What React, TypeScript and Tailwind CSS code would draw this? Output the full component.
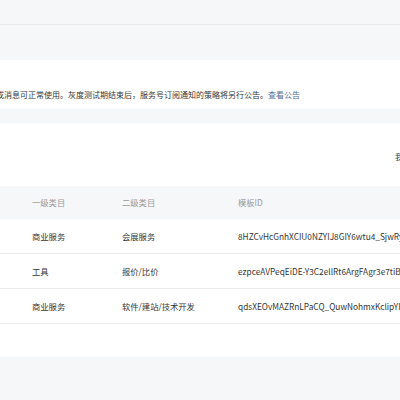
const rows = [
  { first: "商业服务", second: "会展服务", id: "8HZCvHcGnhXCIU0NZYIJ8GIY6wtu4_SjwRyQb3kD2mL" },
  { first: "工具", second: "报价/比价", id: "ezpceAVPeqEiDE-Y3C2ellRt6ArgFAgr3e7tiBxk9Pq" },
  { first: "商业服务", second: "软件/建站/技术开发", id: "qdsXEOvMAZRnLPaCQ_QuwNohmxKclipYIw2sT0aVh" },
];

export default function App() {
  return (
    <div
      className="h-[400px] w-[400px] overflow-hidden bg-[#f6f7f9] text-[8.3px] leading-none text-[#353535]"
      style={{ fontFamily: '"Noto Sans CJK SC", "Noto Sans", sans-serif' }}
    >
      <div className="h-[25px] border-b border-[#e9eaed]" />
      <div className="h-[35px]" />

      {/* notice */}
      <div className="flex h-[49px] items-center overflow-hidden whitespace-nowrap bg-white pt-[20px] text-[8px]">
        <p className="-ml-[4px]">
          或消息可正常使用。灰度测试期结束后，服务号订阅通知的策略将另行公告。
          <a className="text-[#576b95]">查看公告</a>
        </p>
      </div>

      <div className="h-[14px]" />

      {/* template list */}
      <section className="bg-white pb-[33px]">
        <div className="flex h-[63px] items-center overflow-hidden whitespace-nowrap pl-[395px] pt-[3px]">
          我的模板
        </div>

        <div className="flex h-[33px] items-center whitespace-nowrap bg-[#f6f7f9] text-[#9a9a9a]">
          <span className="w-[122px] pl-[32px]">一级类目</span>
          <span className="w-[116px]">二级类目</span>
          <span>模板ID</span>
        </div>

        {rows.map((row) => (
          <div
            key={row.id}
            className="flex h-[35px] items-center overflow-hidden whitespace-nowrap border-b border-[#ececee]"
          >
            <span className="w-[122px] shrink-0 pl-[32px]">{row.first}</span>
            <span className="w-[116px] shrink-0">{row.second}</span>
            <span>{row.id}</span>
          </div>
        ))}
      </section>
    </div>
  );
}
